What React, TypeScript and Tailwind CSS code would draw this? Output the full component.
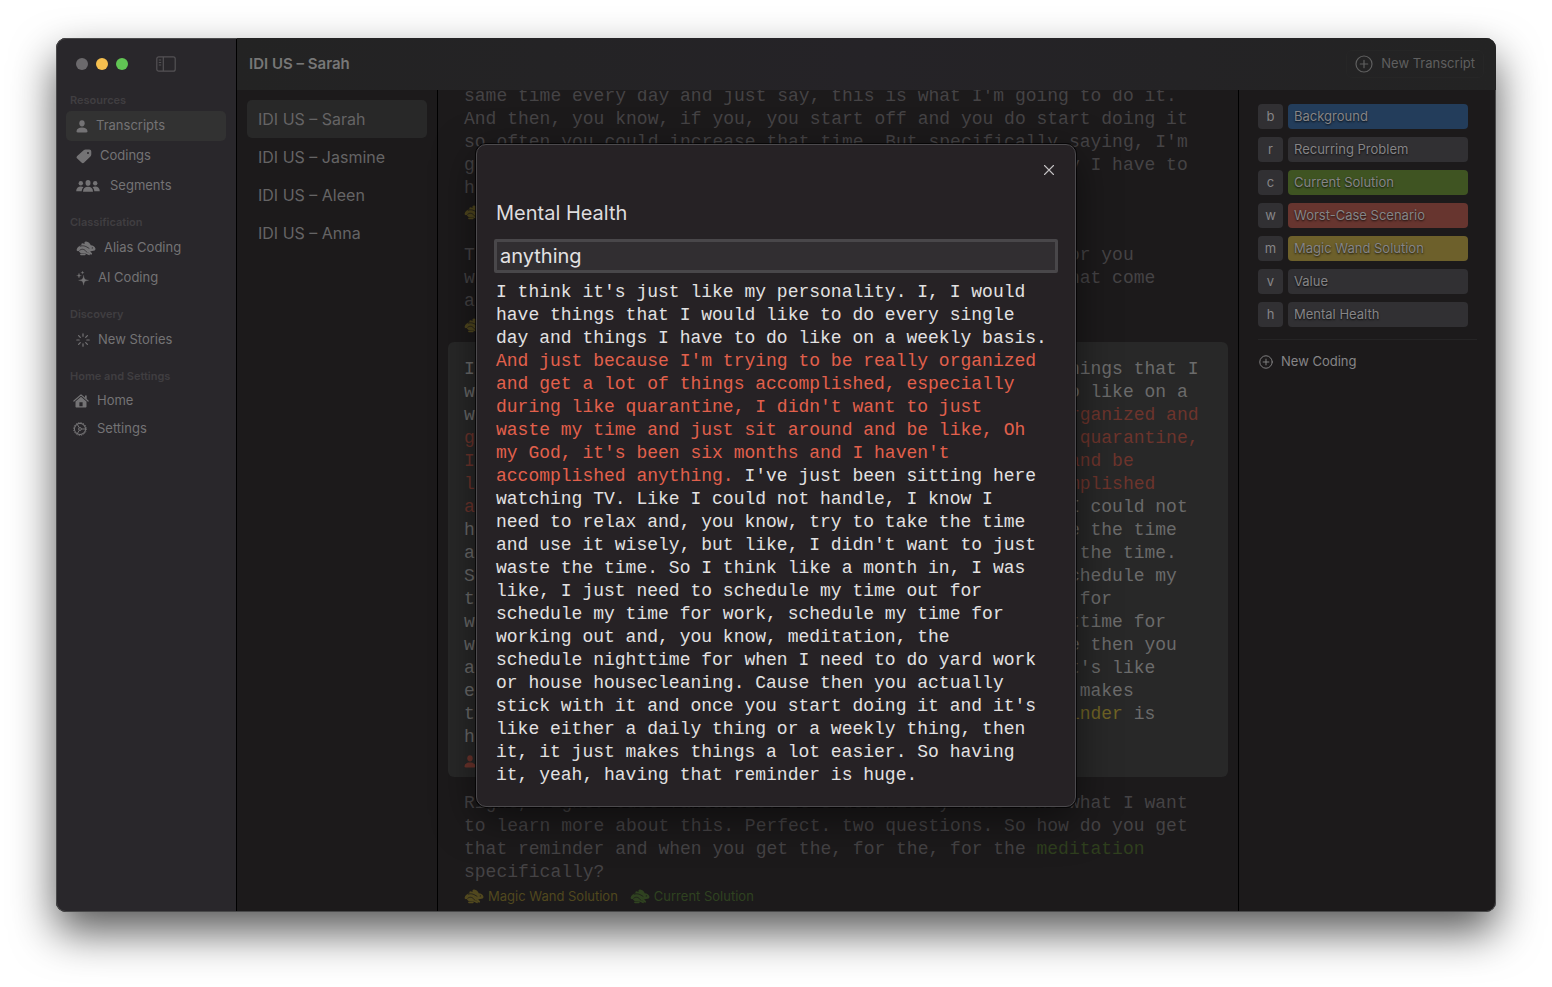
import React from "react";

function Hare() {
  return (
    <svg viewBox="0 0 20 15" className="h-[15px] w-5 shrink-0" fill="none" strokeLinecap="round" aria-hidden="true">
      <mask id="hare-lines">
        <rect width="20" height="15" fill="#fff" />
        <path d="M4.200 5.200C7.500 4 10 5.400 13 7.300" stroke="#000" strokeWidth=".8" />
        <path d="M3.800 9.200C6.500 7 9 8.600 10.800 11.200" stroke="#000" strokeWidth=".8" />
        <circle cx="16.300" cy="6.900" r=".6" fill="#000" />
      </mask>
      <g mask="url(#hare-lines)">
        <path
          d="M.6 8.800C1.200 6.300 3.200 4.700 5.600 4.300 4.900 3 5.700 2.200 7 2.400L8.800 2.800C8 1.500 8.700.4 10.200.6 12.500.9 14.100 2.500 14.800 4.300 17 4.400 19 5.800 19.500 7.800 19.600 9.300 18.200 10 16.200 10 15.200 10.100 14.400 10.400 13.800 10.900L9.600 12.400 4.600 11.900C3.600 11.400 3 10.700 2.700 10.100 1.600 10.500.5 9.900.6 8.800Z"
          fill="currentColor"
        />
        <path d="M5 13.300H8.800M13 10.800 15.200 12.700M10.400 11.900 13 13.300" stroke="currentColor" strokeWidth="1.800" />
      </g>
    </svg>
  );
}

function Person() {
  return (
    <svg viewBox="0 0 12 13" className="h-[13px] w-3 shrink-0" fill="currentColor" aria-hidden="true">
      <ellipse cx="6" cy="3.300" rx="2.700" ry="3.100" />
      <path d="M.5 11.200C.7 8.700 3 7.500 6 7.500s5.300 1.200 5.500 3.700c0 .8-.4 1.200-1.200 1.200H1.700c-.8 0-1.200-.4-1.200-1.200z" />
    </svg>
  );
}

function Tag() {
  return (
    <svg viewBox="0 0 16 15" className="h-[15px] w-4 shrink-0" aria-hidden="true">
      <path
        fillRule="evenodd"
        d="M9.600.6H13.200C14.500.6 15.300 1.400 15.300 2.700V5.300C15.300 6.200 15 6.800 14.400 7.400L8.200 13.600C7.300 14.500 6.400 14.500 5.500 13.600L1.200 9.600C.3 8.700.3 7.800 1.200 6.900L7.600 1.300C8.200.8 8.800.6 9.600.6ZM12 3A1 1 0 1 0 12 5 1 1 0 1 0 12 3Z"
        fill="currentColor"
      />
    </svg>
  );
}

function Group() {
  return (
    <svg viewBox="0 0 24 12" className="h-3 w-6 shrink-0" fill="currentColor" aria-hidden="true">
      <circle cx="4.800" cy="3.200" r="2.200" />
      <circle cx="19.200" cy="3.200" r="2.200" />
      <ellipse cx="12" cy="2.900" rx="2.500" ry="2.800" />
      <path d="M7 11.700c0-3 2-4.900 5-4.900s5 1.900 5 4.900z" />
      <path d="M.2 11.200c0-3 1.800-4.800 4.600-4.800 1.100 0 2 .3 2.700.8-1.100 1-1.700 2.300-1.800 4zM23.800 11.200c0-3-1.800-4.800-4.600-4.800-1.100 0-2 .3-2.700.8 1.100 1 1.700 2.300 1.800 4z" />
    </svg>
  );
}

function Sparkles() {
  return (
    <svg viewBox="0 0 14 15" className="h-[15px] w-3.5 shrink-0" fill="currentColor" aria-hidden="true">
      <path d="M7.600 4.300C8.200 8.200 8.600 8.600 12.600 9.300 8.600 10 8.200 10.400 7.600 14.300 7 10.400 6.600 10 2.600 9.300 6.600 8.600 7 8.200 7.600 4.300ZM3 2.200C3.400 4 3.600 4.300 5.400 4.600 3.600 4.900 3.400 5.200 3 7 2.600 5.200 2.400 4.900.6 4.600 2.400 4.300 2.600 4 3 2.200ZM6.500 0C6.800 1.200 6.900 1.400 8.100 1.600 6.900 1.800 6.800 2 6.500 3.200 6.200 2 6.100 1.800 4.900 1.600 6.100 1.400 6.200 1.200 6.500 0Z" stroke="currentColor" strokeWidth=".3" />
    </svg>
  );
}

function Rays() {
  return (
    <svg viewBox="0 0 14 14" className="size-3.5 shrink-0" stroke="currentColor" strokeWidth="1.200" strokeLinecap="round" aria-hidden="true">
      <path d="M7 .8v2.400M7 10.800v2.400M.8 7h2.400M10.800 7h2.400M2.600 2.600l1.700 1.700M9.700 9.700l1.700 1.700M2.600 11.400l1.700-1.700M9.700 4.300l1.700-1.700" />
    </svg>
  );
}

function House() {
  return (
    <svg viewBox="0 0 16 14" className="h-3.5 w-4 shrink-0" aria-hidden="true">
      <path d="M.9 7 8 .9 15.100 7" stroke="currentColor" strokeWidth="1.200" fill="none" strokeLinecap="round" strokeLinejoin="round" />
      <path d="M12 1.500h1.700v3.800L12 3.800z" fill="currentColor" />
      <path fillRule="evenodd" d="M2.500 7.500 8 2.800l5.500 4.700v5c0 .7-.4 1.100-1.100 1.100H3.600c-.7 0-1.100-.4-1.100-1.100zM6.400 8.300v4h3.200v-4z" fill="currentColor" />
    </svg>
  );
}

function Gear() {
  return (
    <svg viewBox="0 0 14 14" className="size-3.5 shrink-0" stroke="currentColor" fill="none" aria-hidden="true">
      <circle cx="7" cy="7" r="5.600" strokeWidth="1.100" />
      <circle cx="7" cy="7" r="6.400" strokeWidth="1" strokeDasharray="1.100 1.400" />
      <circle cx="7" cy="7" r="1.400" strokeWidth="1" />
      <path d="M8.400 7h4M6.300 5.800 4.300 2.300M6.300 8.200l-2 3.500" strokeWidth="1" />
    </svg>
  );
}

function PlusCircle({ className }: { className: string }) {
  return (
    <svg viewBox="0 0 18 18" className={className} stroke="currentColor" fill="none" strokeWidth="1.200" strokeLinecap="round" aria-hidden="true">
      <circle cx="9" cy="9" r="8" />
      <path d="M9 5.300v7.400M5.300 9h7.400" />
    </svg>
  );
}

const sections = [
  {
    title: "Resources",
    items: [
      { label: "Transcripts", icon: <Person />, gap: "gap-2", active: true },
      { label: "Codings", icon: <Tag />, gap: "gap-2" },
      { label: "Segments", icon: <Group />, gap: "gap-2.5" },
    ],
  },
  {
    title: "Classification",
    items: [
      { label: "Alias Coding", icon: <Hare />, gap: "gap-2" },
      { label: "AI Coding", icon: <Sparkles />, gap: "gap-2" },
    ],
  },
  {
    title: "Discovery",
    items: [{ label: "New Stories", icon: <Rays />, gap: "gap-2" }],
  },
];

const transcripts = ["IDI US – Sarah", "IDI US – Jasmine", "IDI US – Aleen", "IDI US – Anna"];

const codings = [
  { key: "b", label: "Background", color: "bg-[#233d5b]" },
  { key: "r", label: "Recurring Problem", color: "bg-[#313033]" },
  { key: "c", label: "Current Solution", color: "bg-[#3f5422]" },
  { key: "w", label: "Worst-Case Scenario", color: "bg-[#67352f]" },
  { key: "m", label: "Magic Wand Solution", color: "bg-[#6d602b]" },
  { key: "v", label: "Value", color: "bg-[#313033]" },
  { key: "h", label: "Mental Health", color: "bg-[#313033]" },
];

function SidebarHeading({ children }: { children: string }) {
  return <h2 className="px-1 text-[11px] leading-4 font-semibold text-[#403e41]">{children}</h2>;
}

function Sidebar() {
  return (
    <nav className="flex w-[181px] shrink-0 flex-col border-r border-black bg-[#29272b] px-2.5 text-[13px] text-[#747375]">
      <div className="mb-0.5 flex h-[52px] items-center gap-2 px-2.5">
        <button aria-label="Close window" className="size-3 rounded-full bg-[#6b696c]" />
        <button aria-label="Minimize window" className="size-3 rounded-full bg-[#f5bf4f]" />
        <button aria-label="Zoom window" className="size-3 rounded-full bg-[#61c554]" />
        <button aria-label="Toggle sidebar" className="ml-5 text-[#545255]">
          <svg viewBox="0 0 20 16" className="h-4 w-5" fill="none" stroke="currentColor" strokeWidth="1.200" aria-hidden="true">
            <rect x=".8" y=".8" width="18.400" height="14.400" rx="2" />
            <path d="M7.300 1v14M2.800 4h2.400M2.800 6.500h2.400M2.800 9h2.400" />
          </svg>
        </button>
      </div>
      <div className="flex flex-col gap-[13px]">
        {sections.map((s) => (
          <section key={s.title}>
            <SidebarHeading>{s.title}</SidebarHeading>
            <ul className="mt-[3px]">
              {s.items.map((it) => (
                <li key={it.label}>
                  <a
                    href="#"
                    className={`flex h-[30px] items-center rounded-[5px] px-2.5 ${it.gap} ${"active" in it ? "bg-[#323232]" : ""}`}
                  >
                    {it.icon}
                    {it.label}
                  </a>
                </li>
              ))}
            </ul>
          </section>
        ))}
        <section>
          <SidebarHeading>Home and Settings</SidebarHeading>
          <ul className="mt-[3px]">
            <li>
              <a href="#" className="flex h-7 items-center gap-2 px-[7px]">
                <House />
                Home
              </a>
            </li>
            <li>
              <a href="#" className="flex h-7 items-center gap-2.5 px-[7px]">
                <Gear />
                Settings
              </a>
            </li>
          </ul>
        </section>
      </div>
    </nav>
  );
}

function TagLabel({ tone, children }: { tone: string; children: string }) {
  return (
    <span className={`flex items-center gap-1 text-[13px] ${tone}`}>
      <Hare />
      {children}
    </span>
  );
}

const EARLIER = `same time every day and just say, this is what I'm going to do it.
And then, you know, if you, you start off and you do start doing it
so often you could increase that time. But specifically saying, I'm
going to do this at this time, it's the way that they say I have to
have it.`;

const QUESTION = `That makes sense. And what does it look like if it was for you
when you are thinking about the kinds of new reminders that come
at that time?`;

function Transcript() {
  return (
    <main className="min-w-0 flex-1 overflow-hidden border-r border-black px-2.5 font-['Liberation_Mono',monospace] text-lg leading-[23px] text-[#454345]">
      <div className="-mt-[5px] px-4">
        <p className="whitespace-pre">{EARLIER}</p>
        <div className="flex h-[25px] items-center font-['Inter',sans-serif]">
          <TagLabel tone="text-[#51481e]">Magic Wand Solution</TagLabel>
        </div>
        <p className="mt-[19px] whitespace-pre">{QUESTION}</p>
        <div className="flex h-[25px] items-center font-['Inter',sans-serif]">
          <TagLabel tone="text-[#51481e]">Magic Wand Solution</TagLabel>
        </div>
      </div>
      <article className="mt-1 rounded-md bg-[#282828] px-4 pt-4 pb-1 text-[#6b6b6b]">
        <p className="whitespace-pre">
          {`I think it's just like my personality. I, I would have things that I
would like to do every single day and things I have to do like on a
weekly basis. `}
          <span className="text-[#6d342c]">
            {`And just because I'm trying to be really organized and
get a lot of things accomplished, especially during like quarantine,
I didn't want to just waste my time and just sit around and be
like, Oh my God, it's been six months and I haven't accomplished
anything.`}
          </span>
          {` I've just been sitting here watching TV. Like I could not
handle, I know I need to relax and, you know, try to take the time
and use it wisely, but like, I didn't want to just waste the time.
So I think like a month in, I was like, I just need to schedule my
time out for schedule my time for work, schedule my time for
working out and, you know, meditation, the schedule nighttime for
when I need to do yard work or house housecleaning. Cause then you
actually stick with it and once you start doing it and it's like
either a daily thing or a weekly thing, then it, it just makes
things a lot easier. So having it, yeah, having that `}
          <span className="text-[#6f6225]">reminder</span>
          {` is
huge.`}
        </p>
        <div className="flex h-6 items-center gap-1.5 font-['Inter',sans-serif] text-[13px] text-[#6d342c]">
          <Person />
          Worst-Case Scenario
        </div>
      </article>
      <div className="mt-[15px] px-4">
        <p className="whitespace-pre">
          {`Right, right. Just fantastic. It's definitely what like what I want
to learn more about this. Perfect. two questions. So how do you get
that reminder and when you get the, for the, for the `}
          <span className="text-[#2f3f1e]">meditation</span>
          {`
specifically?`}
        </p>
        <div className="flex h-[25px] items-center gap-3 font-['Inter',sans-serif]">
          <TagLabel tone="text-[#51481e]">Magic Wand Solution</TagLabel>
          <TagLabel tone="text-[#2f4220]">Current Solution</TagLabel>
        </div>
      </div>
    </main>
  );
}

function CodingPanel() {
  return (
    <aside className="w-[257px] shrink-0 px-[19px] pt-3.5 text-[13px] text-[#868587]">
      <ul className="flex flex-col gap-2">
        {codings.map((c) => (
          <li key={c.key} className="flex gap-[5px]">
            <kbd className="flex h-[25px] w-[25px] items-center justify-center rounded bg-[#313033] font-['Inter',sans-serif]">{c.key}</kbd>
            <button className={`h-[25px] w-[180px] rounded px-1.5 text-left [text-shadow:0_1px_2px_rgba(0,0,0,0.8)] ${c.color}`}>{c.label}</button>
          </li>
        ))}
      </ul>
      <hr className="mt-3 border-[#252425]" />
      <button className="mt-3 flex items-center gap-2 pl-px">
        <PlusCircle className="size-3.5" />
        New Coding
      </button>
    </aside>
  );
}

const BEFORE = `I think it's just like my personality. I, I would
have things that I would like to do every single
day and things I have to do like on a weekly basis.
`;

const MATCH = `And just because I'm trying to be really organized
and get a lot of things accomplished, especially
during like quarantine, I didn't want to just
waste my time and just sit around and be like, Oh
my God, it's been six months and I haven't
accomplished anything.`;

const AFTER = ` I've just been sitting here
watching TV. Like I could not handle, I know I
need to relax and, you know, try to take the time
and use it wisely, but like, I didn't want to just
waste the time. So I think like a month in, I was
like, I just need to schedule my time out for
schedule my time for work, schedule my time for
working out and, you know, meditation, the
schedule nighttime for when I need to do yard work
or house housecleaning. Cause then you actually
stick with it and once you start doing it and it's
like either a daily thing or a weekly thing, then
it, it just makes things a lot easier. So having
it, yeah, having that reminder is huge.`;

function CodingDialog() {
  return (
    <div className="absolute inset-0 flex items-center justify-center">
      <div
        role="dialog"
        aria-labelledby="coding-title"
        className="flex w-[600px] flex-col rounded-[10px] border border-[#4c4a4d] bg-[#262225] px-[17px] pt-[15px] pb-[19px] shadow-[0_12px_40px_rgba(0,0,0,0.5),0_0_0_1px_rgba(0,0,0,0.7)]"
      >
        <button aria-label="Close" className="-mr-px self-end text-[#c2c0c2]">
          <svg viewBox="0 0 12 12" className="m-1 size-3" stroke="currentColor" strokeWidth="1.100" strokeLinecap="round" aria-hidden="true">
            <path d="M1.500 1.500l9 9M10.500 1.500l-9 9" />
          </svg>
        </button>
        <label id="coding-title" htmlFor="coding-alias" className="mt-[19px] pl-0.5 text-xl leading-7 text-[#dedcde]">
          Mental Health
        </label>
        <input
          id="coding-alias"
          defaultValue="anything"
          className="mt-3 h-[34px] w-full rounded-xs border-[3px] border-[#49474a] bg-[#312e31] px-[3px] text-xl text-[#e3e2e3] outline-none"
        />
        <p className="mt-2 whitespace-pre pl-0.5 font-['Liberation_Mono',monospace] text-lg leading-[23px] text-[#e2e1e2]">
          {BEFORE}
          <span className="text-[#e2604c]">{MATCH}</span>
          {AFTER}
        </p>
      </div>
    </div>
  );
}

export default function App() {
  return (
    <div className="flex min-h-screen flex-col bg-white px-14 pt-[38px] pb-[75px] font-['Inter',sans-serif]">
      <div className="relative flex flex-1 overflow-hidden rounded-[10px] bg-[#1c1a1b] shadow-[0_20px_44px_rgba(0,0,0,0.65)] outline-1 -outline-offset-1 outline-[#49494a]">
        <Sidebar />
        <div className="flex min-w-0 flex-1 flex-col">
          <header className="z-0 flex h-[52px] shrink-0 items-center justify-between bg-linear-to-r from-[#232323] via-[#252327] to-[#232323] px-3">
            <h1 className="text-[15px] font-semibold text-[#777]">IDI US – Sarah</h1>
            <button className="flex h-7 items-center gap-2 rounded-md border border-[#262626] px-2 text-[13px] text-[#5f5f5f]">
              <PlusCircle className="size-[18px]" />
              New Transcript
            </button>
          </header>
          <div className="flex min-h-0 flex-1">
            <ul className="flex w-[201px] shrink-0 flex-col border-r border-black px-2.5 pt-2.5 text-base text-[#656465]">
              {transcripts.map((t, i) => (
                <li key={t}>
                  <a href="#" className={`flex h-[38px] items-center rounded-[5px] px-[11px] ${i === 0 ? "bg-[#282828]" : ""}`}>
                    {t}
                  </a>
                </li>
              ))}
            </ul>
            <Transcript />
            <CodingPanel />
          </div>
        </div>
        <CodingDialog />
      </div>
    </div>
  );
}
